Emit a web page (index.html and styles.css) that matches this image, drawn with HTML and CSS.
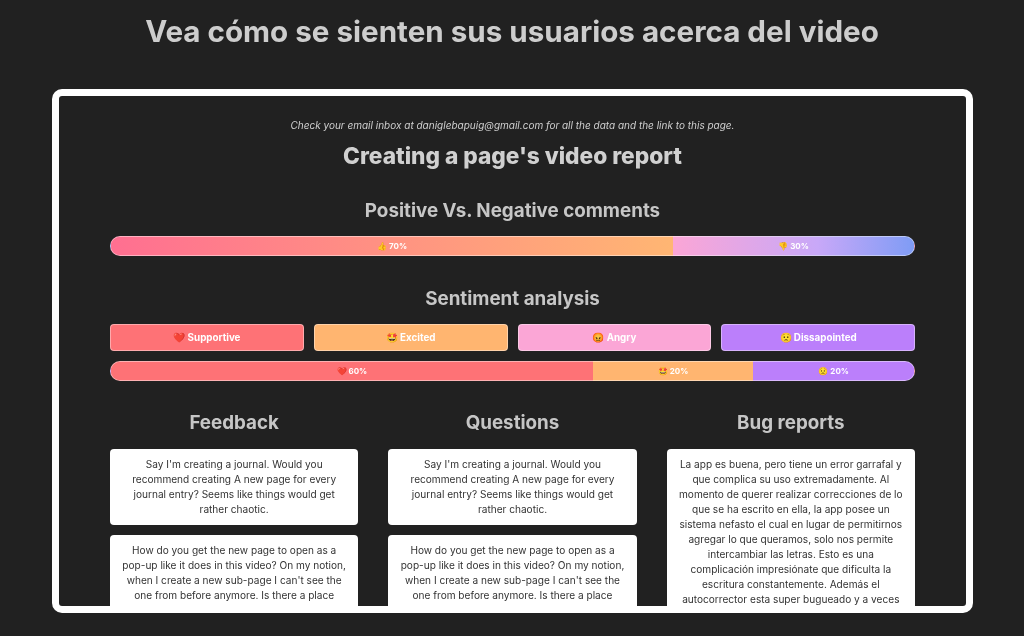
FILE: index.html
```html
<!DOCTYPE html>
<html lang="es">
<head>
<meta charset="utf-8">
<title>Video report</title>
<link rel="stylesheet" href="styles.css">
</head>
<body>
<h1 class="headline">Vea cómo se sienten sus usuarios acerca del video</h1>
<div class="frame">
  <div class="report">
    <p class="notice">Check your email inbox at daniglebapuig@gmail.com for all the data and the link to this page.</p>
    <h2 class="title">Creating a page's video report</h2>
    <h3 class="section first">Positive Vs. Negative comments</h3>
    <div class="bar mood">
      <div class="seg pos" style="width:70%">👍 70%</div>
      <div class="seg neg" style="width:30%">👎 30%</div>
    </div>
    <h3 class="section second">Sentiment analysis</h3>
    <div class="chips">
      <div class="chip red">❤️ Supportive</div>
      <div class="chip orange">🤩 Excited</div>
      <div class="chip pink">😡 Angry</div>
      <div class="chip purple">😟 Dissapointed</div>
    </div>
    <div class="bar sentiment">
      <div class="seg red" style="width:60%">❤️ 60%</div>
      <div class="seg orange" style="width:20%">🤩 20%</div>
      <div class="seg purple" style="width:20%">😟 20%</div>
    </div>
    <div class="columns">
      <div class="col">
        <h3 class="section">Feedback</h3>
        <div class="card">Say I'm creating a journal. Would you recommend creating A new page for every journal entry? Seems like things would get rather chaotic.</div>
        <div class="card">How do you get the new page to open as a pop-up like it does in this video? On my notion, when I create a new sub-page I can't see the one from before anymore. Is there a place where I can change that setting in my workspace?</div>
      </div>
      <div class="col">
        <h3 class="section">Questions</h3>
        <div class="card">Say I'm creating a journal. Would you recommend creating A new page for every journal entry? Seems like things would get rather chaotic.</div>
        <div class="card">How do you get the new page to open as a pop-up like it does in this video? On my notion, when I create a new sub-page I can't see the one from before anymore. Is there a place where I can change that setting in my workspace?</div>
      </div>
      <div class="col">
        <h3 class="section">Bug reports</h3>
        <div class="card">La app es buena, pero tiene un error garrafal y que complica su uso extremadamente. Al momento de querer realizar correcciones de lo que se ha escrito en ella, la app posee un sistema nefasto el cual en lugar de permitirnos agregar lo que queramos, solo nos permite intercambiar las letras. Esto es una complicación impresiónate que dificulta la escritura constantemente. Además el autocorrector esta super bugueado y a veces cambia las palabras.</div>
      </div>
    </div>
  </div>
</div>
</body>
</html>
```
FILE: styles.css
```css
* { box-sizing: border-box; }
html, body { margin: 0; height: 636px; overflow: hidden; }
body {
  background: #212121;
  font-family: Inter, "Noto Sans", sans-serif;
  color: #cfcfcf;
}
.headline {
  margin: 0;
  padding-top: 12px;
  height: 89px;
  text-align: center;
  font-size: 29.6px;
  line-height: 38px;
  font-weight: 700;
  color: #cdcdcd;
  filter: blur(0.4px);
}
.frame {
  margin: 0 51px 0 52px;
  height: 524px;
  border: 7px solid #fff;
  border-radius: 10px;
  background: #212121;
  overflow: hidden;
  filter: blur(0.35px);
}
.report {
  height: 100%;
  padding: 0 51px;
  border-radius: 6px;
  overflow: hidden;
  background: #212121;
}
.notice {
  margin: 0;
  padding-top: 22px;
  text-align: center;
  font-size: 10px;
  line-height: 15px;
  font-style: italic;
  color: #cfcfcf;
}
.title {
  margin: 7px 0 0;
  text-align: center;
  font-size: 22.7px;
  line-height: 31px;
  font-weight: 800;
  color: #d0d0d0;
}
.section {
  margin: 0;
  text-align: center;
  font-size: 18.8px;
  line-height: 26px;
  font-weight: 700;
  color: #c6c6c6;
}
.section.first { margin-top: 27px; margin-bottom: 12px; }
.section.second { margin-top: 30px; margin-bottom: 12px; }
.bar {
  display: flex;
  height: 20px;
  border: 1px solid rgba(255, 255, 255, 0.45);
  border-radius: 10px;
  overflow: hidden;
}
.bar.mood { background: linear-gradient(90deg, #ff6f91 0%, #ffb673 70%, #fba6d6 70%, #7f9cf5 100%); }
.bar.sentiment { background: linear-gradient(90deg, #fe7276 60%, #ffb570 60%, #ffb570 80%, #bb7ffb 80%); }
.seg {
  display: flex;
  align-items: center;
  justify-content: center;
  font-size: 8px;
  font-weight: 700;
  color: #fff;
}
.pos { background: linear-gradient(90deg, #ff6f91 0%, #ffb673 100%); }
.neg { background: linear-gradient(90deg, #fba6d6 0%, #c8a8f8 60%, #7f9cf5 100%); }
.red { background: #fe7276; }
.orange { background: #ffb570; }
.pink { background: #fba6d6; }
.purple { background: #bb7ffb; }
.chips {
  display: grid;
  grid-template-columns: repeat(4, 1fr);
  gap: 10px;
  margin-bottom: 10px;
}
.chip {
  height: 27px;
  display: flex;
  align-items: center;
  justify-content: center;
  border: 1px solid rgba(255, 255, 255, 0.4);
  border-radius: 4px;
  font-size: 9.8px;
  font-weight: 700;
  color: #fff;
}
.columns {
  display: grid;
  grid-template-columns: repeat(3, 1fr);
  gap: 30px;
  margin-top: 29px;
}
.col { display: flex; flex-direction: column; gap: 10px; }
.col .section { margin-bottom: 3px; }
.card {
  background: #fff;
  border-radius: 4px;
  padding: 8px 10px;
  text-align: center;
  font-size: 10.1px;
  line-height: 15px;
  color: #333;
}
```
